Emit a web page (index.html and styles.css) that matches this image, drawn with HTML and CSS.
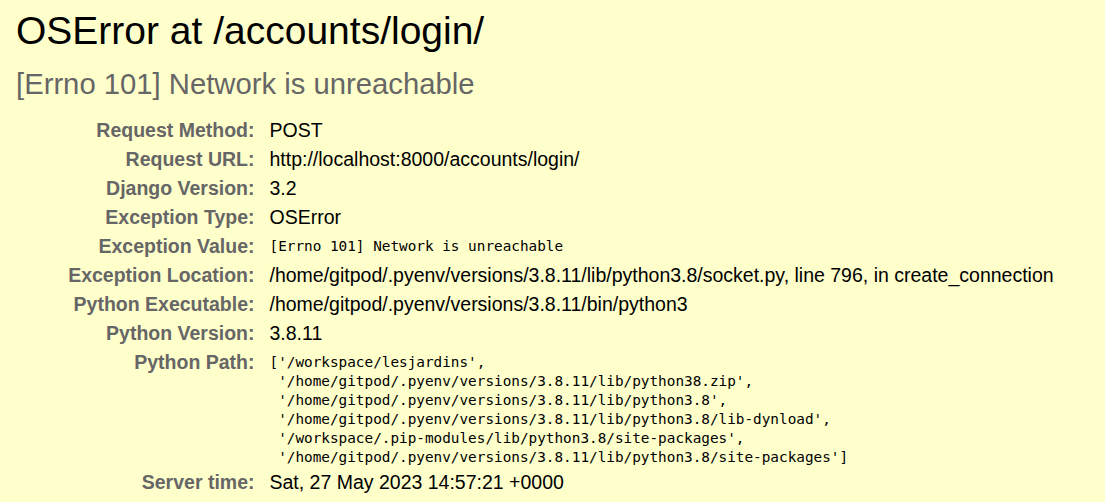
FILE: index.html
```html
<!DOCTYPE html>
<html lang="en">
<head>
<meta charset="utf-8">
<title>OSError at /accounts/login/</title>
<link rel="stylesheet" href="styles.css">
</head>
<body>
<div class="summary">
  <h1 class="title">OSError at /accounts/login/</h1>
  <h2 class="subtitle">[Errno 101] Network is unreachable</h2>
  <table class="meta">
    <tbody>
      <tr><th>Request Method:</th><td>POST</td></tr>
      <tr><th>Request URL:</th><td>http://localhost:8000/accounts/login/</td></tr>
      <tr><th>Django Version:</th><td>3.2</td></tr>
      <tr><th>Exception Type:</th><td>OSError</td></tr>
      <tr><th>Exception Value:</th><td><pre class="mono">[Errno 101] Network is unreachable</pre></td></tr>
      <tr><th>Exception Location:</th><td><span class="fname">/home/gitpod/.pyenv/versions/3.8.11/lib/python3.8/socket.py</span>, line 796, in create_connection</td></tr>
      <tr><th>Python Executable:</th><td>/home/gitpod/.pyenv/versions/3.8.11/bin/python3</td></tr>
      <tr><th>Python Version:</th><td>3.8.11</td></tr>
      <tr><th>Python Path:</th><td><pre class="mono path">['/workspace/lesjardins',
 '/home/gitpod/.pyenv/versions/3.8.11/lib/python38.zip',
 '/home/gitpod/.pyenv/versions/3.8.11/lib/python3.8',
 '/home/gitpod/.pyenv/versions/3.8.11/lib/python3.8/lib-dynload',
 '/workspace/.pip-modules/lib/python3.8/site-packages',
 '/home/gitpod/.pyenv/versions/3.8.11/lib/python3.8/site-packages']</pre></td></tr>
      <tr><th>Server time:</th><td>Sat, 27 May 2023 14:57:21 +0000</td></tr>
    </tbody>
  </table>
</div>
</body>
</html>
```
FILE: styles.css
```css
html, body {
  margin: 0;
  padding: 0;
}
body {
  background: #ffffcc;
  color: #000;
  font-family: "Liberation Sans", Arial, sans-serif;
  font-size: 19.5px;
}
.summary {
  background: #ffffcc;
  padding: 8px 15px 0 16px;
  height: 494px;
}
.title {
  margin: 0;
  font-size: 39px;
  font-weight: normal;
  line-height: 45px;
}
.subtitle {
  margin: 14px 0 0 0;
  font-size: 29.25px;
  font-weight: normal;
  line-height: 34px;
  color: #666;
}
.meta {
  margin-top: 15px;
  border-collapse: collapse;
  border: none;
}
.meta th, .meta td {
  vertical-align: top;
  padding: 3px 4.5px;
  line-height: 23px;
}
.meta th {
  width: 234px;
  text-align: right;
  color: #666;
  font-weight: bold;
  padding-right: 10px;
  white-space: nowrap;
}
.meta td {
  padding-left: 5px;
  white-space: nowrap;
}
.mono {
  margin: 0;
  font-family: "DejaVu Sans Mono", "Liberation Mono", monospace;
  font-size: 14.35px;
  line-height: 19px;
  white-space: pre;
  padding-top: 2px;
}
.path {
  margin-bottom: -2px;
}
```
